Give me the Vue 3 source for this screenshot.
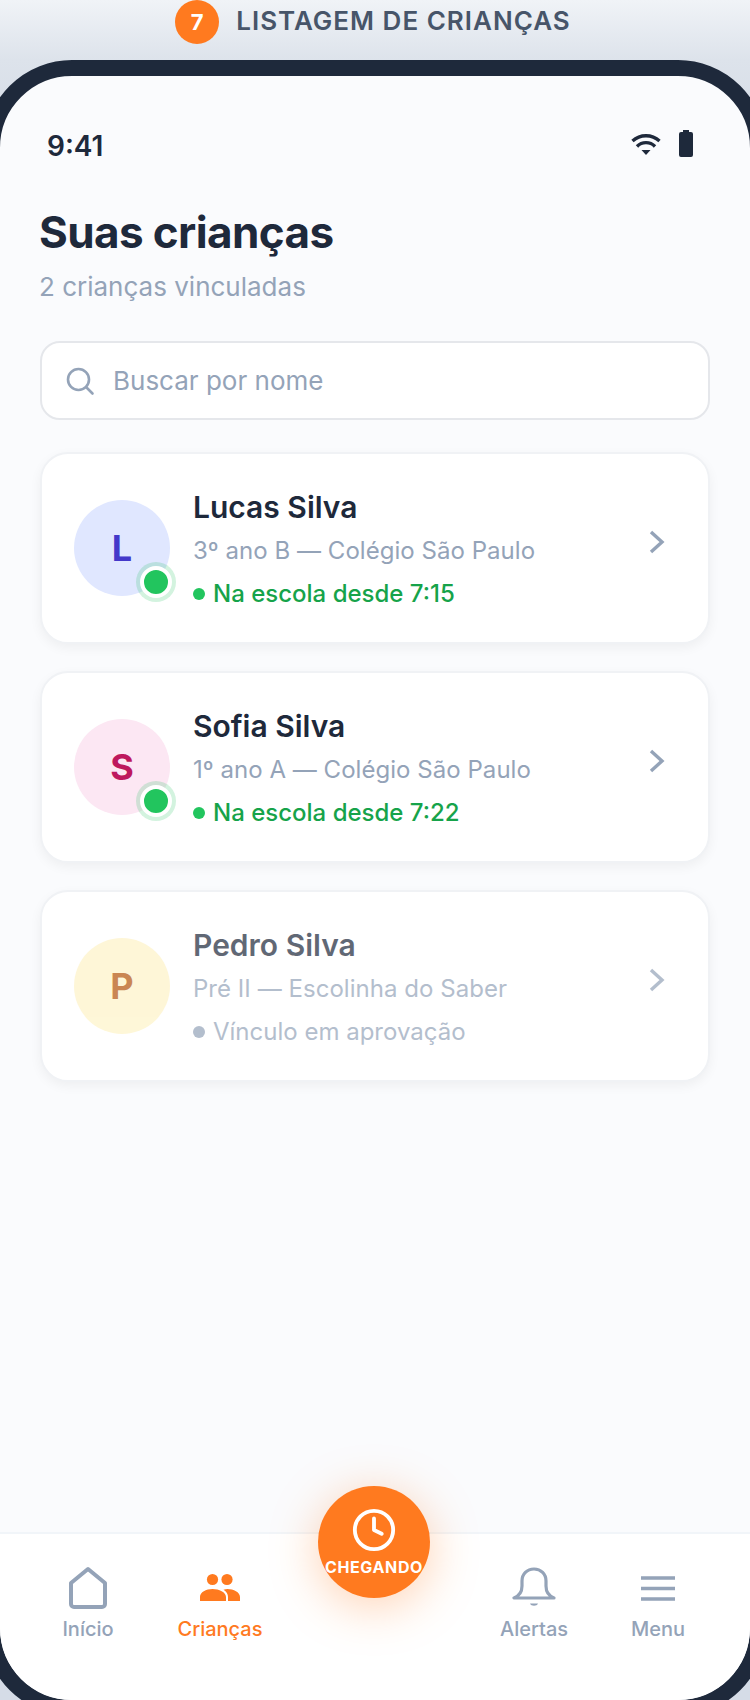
<template>
  <div class="page">
    <div class="caption">
      <span class="step">7</span>
      <span class="caption-text">LISTAGEM DE CRIANÇAS</span>
    </div>
    <div class="device">
      <div class="screen">
        <div class="status-bar">
          <span class="time">9:41</span>
          <div class="status-icons">
            <svg class="wifi" width="30" height="22" viewBox="0 0 30 22"><path d="M1.500 7A20 20 0 0 1 28.500 7M6 12.500A12.500 12.500 0 0 1 24 12.500" fill="none" stroke="#1e293b" stroke-width="3.4"/><path d="M10.500 16h9L15 21z" fill="#1e293b"/></svg>
            <svg width="14" height="27" viewBox="0 0 14 27"><path d="M4 0h6v2h2a2 2 0 0 1 2 2v21a2 2 0 0 1-2 2H2a2 2 0 0 1-2-2V4a2 2 0 0 1 2-2h2z" fill="#1e293b"/></svg>
          </div>
        </div>

        <main class="content">
          <h1 class="title">Suas crianças</h1>
          <p class="subtitle">2 crianças vinculadas</p>

          <div class="search">
            <svg width="30" height="30" viewBox="0 0 30 30"><circle cx="13.500" cy="13.500" r="10.500" fill="none" stroke="#94a3b8" stroke-width="2.6"/><path d="M21.500 21.500l6 6" stroke="#94a3b8" stroke-width="2.6" stroke-linecap="round"/></svg>
            <span>Buscar por nome</span>
          </div>

          <div class="cards">
            <div v-for="kid in kids" :key="kid.name" class="card" :class="{ pending: kid.pending }">
              <div class="avatar" :class="kid.tone">
                {{ kid.name[0] }}
                <span v-if="!kid.pending" class="online"></span>
              </div>
              <div class="info">
                <div class="name">{{ kid.name }}</div>
                <div class="school">{{ kid.school }}</div>
                <div class="state"><i></i>{{ kid.state }}</div>
              </div>
              <svg class="chevron" width="18" height="26" viewBox="0 0 18 26"><path d="M3 3l11 10L3 23" fill="none" stroke="#94a3b8" stroke-width="3.4"/></svg>
            </div>
          </div>
        </main>

        <nav class="tabbar">
          <div class="tab">
            <svg width="40" height="44" viewBox="0 0 40 44"><path d="M20 3L37 17V38a3 3 0 0 1-3 3H6a3 3 0 0 1-3-3V17z" fill="none" stroke="#94a3b8" stroke-width="4" stroke-linejoin="round"/></svg>
            <span>Início</span>
          </div>
          <div class="tab active">
            <svg width="42" height="44" viewBox="0 0 42 44"><circle cx="13.500" cy="13.500" r="5.600" fill="#ff7a1f"/><circle cx="28" cy="13.500" r="5.600" fill="#ff7a1f"/><path d="M1 35v-4c0-5 6-8 12.500-8S27 26 27 31v4zM29 35v-4c0-3-1.500-5.500-4.500-7.300 1.400-.4 2.800-.7 4-.7 6 0 12.500 3 12.500 8v4z" fill="#ff7a1f"/></svg>
            <span>Crianças</span>
          </div>
          <div class="tab-gap"></div>
          <div class="tab">
            <svg width="44" height="44" viewBox="0 0 44 44"><path d="M2 32h40c-5-2-8-6-8-12v-5C34 8 29 3 22 3S10 8 10 15v5c0 6-3 10-8 12z" fill="none" stroke="#94a3b8" stroke-width="3.2" stroke-linejoin="round"/><path d="M18 37.500h8c-1 3-7 3-8 0z" fill="#94a3b8"/></svg>
            <span>Alertas</span>
          </div>
          <div class="tab">
            <svg width="44" height="44" viewBox="0 0 44 44"><path d="M5 12h34M5 22.500h34M5 33h34" stroke="#94a3b8" stroke-width="3.600"/></svg>
            <span>Menu</span>
          </div>

          <div class="fab">
            <svg width="46" height="46" viewBox="0 0 24 24"><circle cx="12" cy="12" r="10" fill="none" stroke="#fff" stroke-width="2"/><path d="M12 6v6l4 2" fill="none" stroke="#fff" stroke-width="2" stroke-linecap="round" stroke-linejoin="round"/></svg>
            <span>CHEGANDO</span>
          </div>
        </nav>
      </div>
    </div>
  </div>
</template>

<script setup>
const kids = [
  { name: 'Lucas Silva', school: '3º ano B — Colégio São Paulo', state: 'Na escola desde 7:15', tone: 'blue' },
  { name: 'Sofia Silva', school: '1º ano A — Colégio São Paulo', state: 'Na escola desde 7:22', tone: 'pink' },
  { name: 'Pedro Silva', school: 'Pré II — Escolinha do Saber', state: 'Vínculo em aprovação', tone: 'yellow', pending: true }
]
</script>

<style>
body {
  margin: 0;
}
</style>

<style scoped>
.page {
  width: 750px;
  height: 1700px;
  overflow: hidden;
  background: linear-gradient(180deg, #f0f3f7 0, #dde3eb 60px, #d6dde7 120px, #d5dce7 100%);
  font-family: Inter, "Liberation Sans", sans-serif;
}

.caption {
  height: 44px;
  margin-bottom: 16px;
  padding-right: 4px;
  display: flex;
  justify-content: center;
  align-items: center;
  gap: 17px;
}

.step {
  width: 44px;
  height: 44px;
  border-radius: 50%;
  background: #ff7a1f;
  color: #fff;
  font-size: 22px;
  font-weight: 700;
  display: flex;
  align-items: center;
  justify-content: center;
}

.caption-text {
  margin-top: -3px;
  font-size: 26px;
  font-weight: 600;
  color: #475569;
  letter-spacing: 1px;
}

.device {
  width: 750px;
  height: 1624px;
  margin-left: -16px;
  border: 16px solid #1e293b;
  border-radius: 88px;
  overflow: hidden;
  background: #fafbfd;
}

.screen {
  height: 100%;
  display: flex;
  flex-direction: column;
}

.status-bar {
  height: 60px;
  margin-top: 40px;
  padding: 0 57px 0 47px;
  display: flex;
  justify-content: space-between;
  align-items: center;
}

.time {
  font-size: 28px;
  font-weight: 600;
  color: #1e293b;
}

.status-icons {
  margin-bottom: 5px;
  display: flex;
  align-items: flex-start;
  gap: 18px;
}

.wifi {
  margin-top: 4px;
}

.content {
  flex: 1;
  padding: 0 40px;
}

.title {
  margin: 29px 0 0 -1px;
  font-size: 44px;
  line-height: 54px;
  font-weight: 700;
  letter-spacing: -0.6px;
  color: #1e293b;
}

.subtitle {
  margin: 12px 0 0 -1px;
  font-size: 26px;
  line-height: 32px;
  color: #94a3b8;
}

.search {
  height: 79px;
  margin-top: 38px;
  padding: 0 23px;
  box-sizing: border-box;
  background: #fff;
  border: 2px solid #e5e7eb;
  border-radius: 20px;
  display: flex;
  align-items: center;
  gap: 18px;
  font-size: 26px;
  color: #94a3b8;
}

.cards {
  margin-top: 32px;
  display: flex;
  flex-direction: column;
  gap: 27px;
}

.card {
  height: 192px;
  box-sizing: border-box;
  padding: 0 32px;
  background: #fff;
  border: 2px solid #f0f2f5;
  border-radius: 28px;
  box-shadow: 0 4px 12px rgba(0, 0, 0, 0.05);
  display: flex;
  align-items: center;
  gap: 23px;
}

.pending .avatar,
.pending .info,
.pending .chevron {
  opacity: 0.7;
}

.avatar {
  position: relative;
  width: 96px;
  height: 96px;
  flex-shrink: 0;
  border-radius: 50%;
  display: flex;
  align-items: center;
  justify-content: center;
  font-size: 36px;
  font-weight: 700;
}

.blue {
  background: #e0e7ff;
  color: #4338ca;
}

.pink {
  background: #fce7f3;
  color: #be185d;
}

.yellow {
  background: #fef3c7;
  color: #b45309;
}

.online {
  position: absolute;
  right: -2px;
  bottom: -2px;
  width: 24px;
  height: 24px;
  border-radius: 50%;
  background: #22c55e;
  border: 4px solid #fff;
  box-shadow: 0 0 0 4px rgba(34, 197, 94, 0.2);
}

.info {
  flex: 1;
  padding-top: 1px;
}

.name {
  font-size: 30px;
  line-height: 38px;
  font-weight: 600;
  color: #1e293b;
}

.school {
  margin-top: 9px;
  font-size: 24px;
  line-height: 32px;
  letter-spacing: 0.04px;
  color: #94a3b8;
}

.state {
  margin-top: 11px;
  font-size: 24px;
  line-height: 32px;
  font-weight: 500;
  color: #16a34a;
  display: flex;
  align-items: center;
  gap: 8px;
}

.state i {
  width: 12px;
  height: 12px;
  border-radius: 50%;
  background: #22c55e;
}

.pending .state {
  color: #94a3b8;
  font-weight: 400;
}

.pending .state i {
  background: #94a3b8;
}

.chevron {
  margin: -12px 10px 0 0;
}

.tabbar {
  position: relative;
  height: 168px;
  box-sizing: border-box;
  padding: 32px 0 0 24px;
  background: #fff;
  border-top: 2px solid #f1f5f9;
  display: grid;
  grid-template-columns: 128px 136px 172px 148px 100px;
  align-content: start;
}

.tab {
  display: flex;
  flex-direction: column;
  align-items: center;
  gap: 7px;
  font-size: 20px;
  font-weight: 500;
  color: #94a3b8;
}

.tab.active {
  color: #ff7a1f;
}

.fab {
  position: absolute;
  left: 318px;
  top: -48px;
  width: 112px;
  height: 112px;
  box-sizing: border-box;
  padding-top: 21px;
  border-radius: 50%;
  background: #ff7a1f;
  box-shadow: 0 8px 48px rgba(255, 122, 31, 0.35);
  color: #fff;
  display: flex;
  flex-direction: column;
  align-items: center;
  font-size: 16px;
  line-height: 20px;
  font-weight: 700;
  letter-spacing: 0.64px;
}

.fab svg {
  display: block;
  margin-bottom: 4px;
}
</style>
